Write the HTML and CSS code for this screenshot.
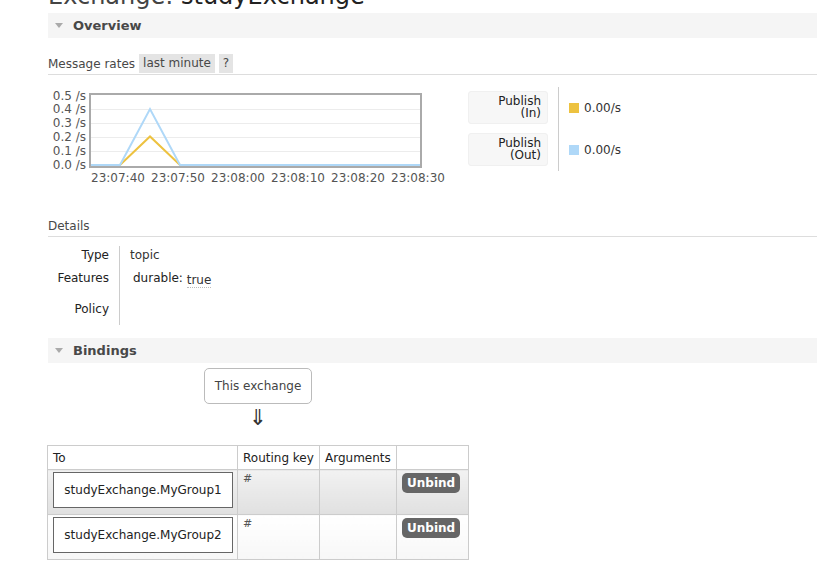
FILE: index.html
```html
<!DOCTYPE html>
<html>
<head>
<meta charset="utf-8">
<link rel="stylesheet" href="styles.css">
</head>
<body>
<div class="main">
  <h1 class="title">Exchange: <b>studyExchange</b></h1>

  <div class="section">
    <h2 class="sec-head"><span class="tri"></span>Overview</h2>
    <div class="sec-body">
      <div class="rates-head">
        <span>Message rates</span>
        <span class="tag">last minute</span>
        <span class="tag">?</span>
      </div>
      <div class="rates">
        <div class="chart">
          <div class="yaxis">
            <span>0.5 /s</span><span>0.4 /s</span><span>0.3 /s</span><span>0.2 /s</span><span>0.1 /s</span><span>0.0 /s</span>
          </div>
          <div class="plotwrap">
            <svg class="plot" width="333" height="75" viewBox="0 0 333 75">
              <g stroke="#ececec" stroke-width="1">
                <line x1="0" y1="16.5" x2="333" y2="16.5"/>
                <line x1="0" y1="30.5" x2="333" y2="30.5"/>
                <line x1="0" y1="44.5" x2="333" y2="44.5"/>
                <line x1="0" y1="58.5" x2="333" y2="58.5"/>
              </g>
              <rect x="1" y="1" width="331" height="73" fill="none" stroke="#aaa" stroke-width="2"/>
              <polyline points="2,72 31,72 61,43.5 91,72 331,72" fill="none" stroke="#edc240" stroke-width="2"/>
              <polyline points="2,72 31,72 61,16 91,72 331,72" fill="none" stroke="#afd8f8" stroke-width="2"/>
            </svg>
            <div class="xaxis">
              <span>23:07:40</span><span>23:07:50</span><span>23:08:00</span><span>23:08:10</span><span>23:08:20</span><span>23:08:30</span>
            </div>
          </div>
        </div>
        <div class="legend">
          <div class="leg-labels">
            <div class="leg-box"><div>Publish</div><div>(In)</div></div>
            <div class="leg-box"><div>Publish</div><div>(Out)</div></div>
          </div>
          <div class="leg-values">
            <div class="leg-val"><span class="sw sw-in"></span><span>0.00/s</span></div>
            <div class="leg-val"><span class="sw sw-out"></span><span>0.00/s</span></div>
          </div>
        </div>
      </div>

      <h3 class="sub-head">Details</h3>
      <table class="facts">
        <tr><th>Type</th><td>topic</td></tr>
        <tr><th>Features</th><td class="feat"><span class="fk">durable:</span> <abbr>true</abbr></td></tr>
        <tr><th>Policy</th><td class="pol"></td></tr>
      </table>
    </div>
  </div>

  <div class="section">
    <h2 class="sec-head"><span class="tri"></span>Bindings</h2>
    <div class="bind">
      <div class="this-ex">This exchange</div>
      <div class="arrow">⇓</div>
      <table class="list">
        <colgroup><col class="c1"><col class="c2"><col class="c3"><col class="c4"></colgroup>
        <thead>
          <tr><th>To</th><th>Routing key</th><th>Arguments</th><th></th></tr>
        </thead>
        <tbody>
          <tr class="alt1">
            <td class="t1"><div class="dest">studyExchange.MyGroup1</div></td>
            <td class="t2">#</td><td></td>
            <td class="t4"><span class="btn">Unbind</span></td>
          </tr>
          <tr class="alt2">
            <td class="t1"><div class="dest">studyExchange.MyGroup2</div></td>
            <td class="t2">#</td><td></td>
            <td class="t4"><span class="btn">Unbind</span></td>
          </tr>
        </tbody>
      </table>
    </div>
  </div>
</div>
</body>
</html>
```

FILE: styles.css
```css
html, body {
  margin: 0;
  padding: 0;
  background: #fff;
}
body {
  font-family: Verdana, "DejaVu Sans", sans-serif;
  font-size: 12px;
  color: #484848;
  overflow: hidden;
}
.main {
  padding-left: 48px;
  margin-top: -19px;
}
.title {
  font-size: 24px;
  font-weight: normal;
  color: #444;
  margin: 0;
  height: 32px;
  line-height: 30px;
  white-space: nowrap;
}
.title b { font-weight: normal; color: #222; }
.sec-head {
  margin: 0;
  height: 25px;
  line-height: 25px;
  background: #f5f5f5;
  font-size: 13px;
  font-weight: bold;
  color: #484848;
  display: flex;
  align-items: center;
  padding-left: 7px;
}
.tri {
  width: 0;
  height: 0;
  border-left: 4.5px solid transparent;
  border-right: 4.5px solid transparent;
  border-top: 5px solid #aaa;
  margin-right: 10px;
}
.sec-body { padding-top: 16px; }
.rates-head {
  display: flex;
  align-items: center;
  height: 19px;
  border-bottom: 1px solid #ddd;
  padding-bottom: 1px;
  color: #484848;
}
.rates-head span:first-child { margin-right: 4px; }
.tag {
  background: #e4e4e4;
  padding: 0 4px;
  height: 19px;
  line-height: 19px;
  margin-right: 4px;
}
.rates {
  display: flex;
  margin-top: 12px;
  height: 100px;
}
.chart {
  display: flex;
  width: 420px;
}
.yaxis {
  width: 38px;
  display: flex;
  flex-direction: column;
  align-items: flex-end;
  padding-top: 2px;
  color: #545454;
  line-height: 14px;
  margin-right: 3px;
}
.yaxis span { height: 14px; }
.yaxis span:first-child { height: 13px; }
.plotwrap { padding-top: 6px; }
.plot { display: block; }
.xaxis {
  display: flex;
  margin-left: 2px;
  color: #545454;
  line-height: 14px;
  margin-top: 3px;
}
.xaxis span { width: 60px; white-space: nowrap; }
.legend {
  display: flex;
}
.leg-labels {
  width: 80px;
  padding-top: 4px;
  display: flex;
  flex-direction: column;
  gap: 9px;
}
.leg-box {
  background: #f7f7f7;
  border-radius: 3px;
  height: 33px;
  text-align: right;
  padding-right: 6px;
  padding-top: 3px;
  box-sizing: border-box;
  color: #222;
  border: 1px solid #f0f0f0;
}
.leg-box div { height: 12px; line-height: 13px; }
.leg-values {
  border-left: 1px solid #ccc;
  margin-left: 10px;
  padding-left: 10px;
  height: 84px;
  display: flex;
  flex-direction: column;
  padding-top: 14px;
  box-sizing: border-box;
  gap: 28px;
}
.leg-val { display: flex; align-items: center; color: #333; height: 14px; gap: 5px; }
.sw { width: 10px; height: 10px; display: block; }
.sw-in { background: #edc240; }
.sw-out { background: #afd8f8; }
.sub-head {
  margin: 30px 0 0 0;
  font-size: 12px;
  font-weight: normal;
  color: #484848;
  height: 18px;
  line-height: 18px;
  border-bottom: 1px solid #ddd;
  padding-bottom: 1px;
}
.facts {
  border-collapse: collapse;
  margin-top: 9px;
  margin-bottom: 13px;
}
.facts th {
  text-align: right;
  font-weight: normal;
  color: #222;
  width: 61px;
  padding: 0 10px 0 0;
  border-right: 1px solid #ccc;
  vertical-align: top;
}
.facts td {
  padding: 0 0 0 10px;
  color: #333;
  vertical-align: top;
}
.facts tr:nth-child(1) th, .facts tr:nth-child(1) td { height: 22px; padding-top: 2px; }
.facts tr:nth-child(2) th, .facts tr:nth-child(2) td { height: 29px; padding-top: 1px; }
.facts tr:nth-child(3) th, .facts tr:nth-child(3) td { height: 23px; padding-top: 2px; }
.feat .fk { margin-left: 3px; color: #222; }
abbr {
  text-decoration: none;
  border-bottom: 1px dotted #bbb;
  position: relative;
  top: 2px;
}
.bind {
  width: 420px;
  display: flex;
  flex-direction: column;
  align-items: center;
}
.this-ex {
  margin-top: 5px;
  width: 108px;
  height: 36px;
  box-sizing: border-box;
  border: 1px solid #bbb;
  border-radius: 5px;
  display: flex;
  align-items: center;
  justify-content: center;
  color: #444;
}
.arrow {
  font-size: 22px;
  line-height: 26px;
  color: #333;
  height: 30px;
  margin-top: 1px;
}
.list {
  margin-top: 10px;
  border-collapse: collapse;
  table-layout: fixed;
  width: 421px;
  border: 1px solid #ccc;
}
col.c1 { width: 190px; }
col.c2 { width: 82px; }
col.c3 { width: 77px; }
col.c4 { width: 72px; }
.list th, .list td {
  border: 1px solid #ccc;
  padding: 0;
}
.list th {
  font-weight: normal;
  text-align: left;
  color: #222;
  height: 23px;
  padding: 0 5px;
  background: #fff;
  white-space: nowrap;
}
.list tbody tr { height: 45px; }
.list td { vertical-align: top; }
.alt1 td { background: linear-gradient(#f2f2f2, #e0e0e0); }
.alt2 td { background: linear-gradient(#fff, #f7f7f7); }
.list td.t1 { padding: 2px 4px 0 5px; }
.list td.t2 { padding: 2px 5px 0; font-size: 11px; color: #555; }
.dest {
  height: 36px;
  border: 1px solid #666;
  background: #fff;
  display: flex;
  align-items: center;
  justify-content: center;
  color: #222;
  box-sizing: border-box;
  white-space: nowrap;
}
.list td.t4 { padding: 3px 0 0 5px; }
.btn {
  display: inline-block;
  background: #666;
  color: #fff;
  font-weight: bold;
  border-radius: 5px;
  padding: 0 5px;
  height: 20px;
  line-height: 20px;
  font-size: 12px;
}
```
